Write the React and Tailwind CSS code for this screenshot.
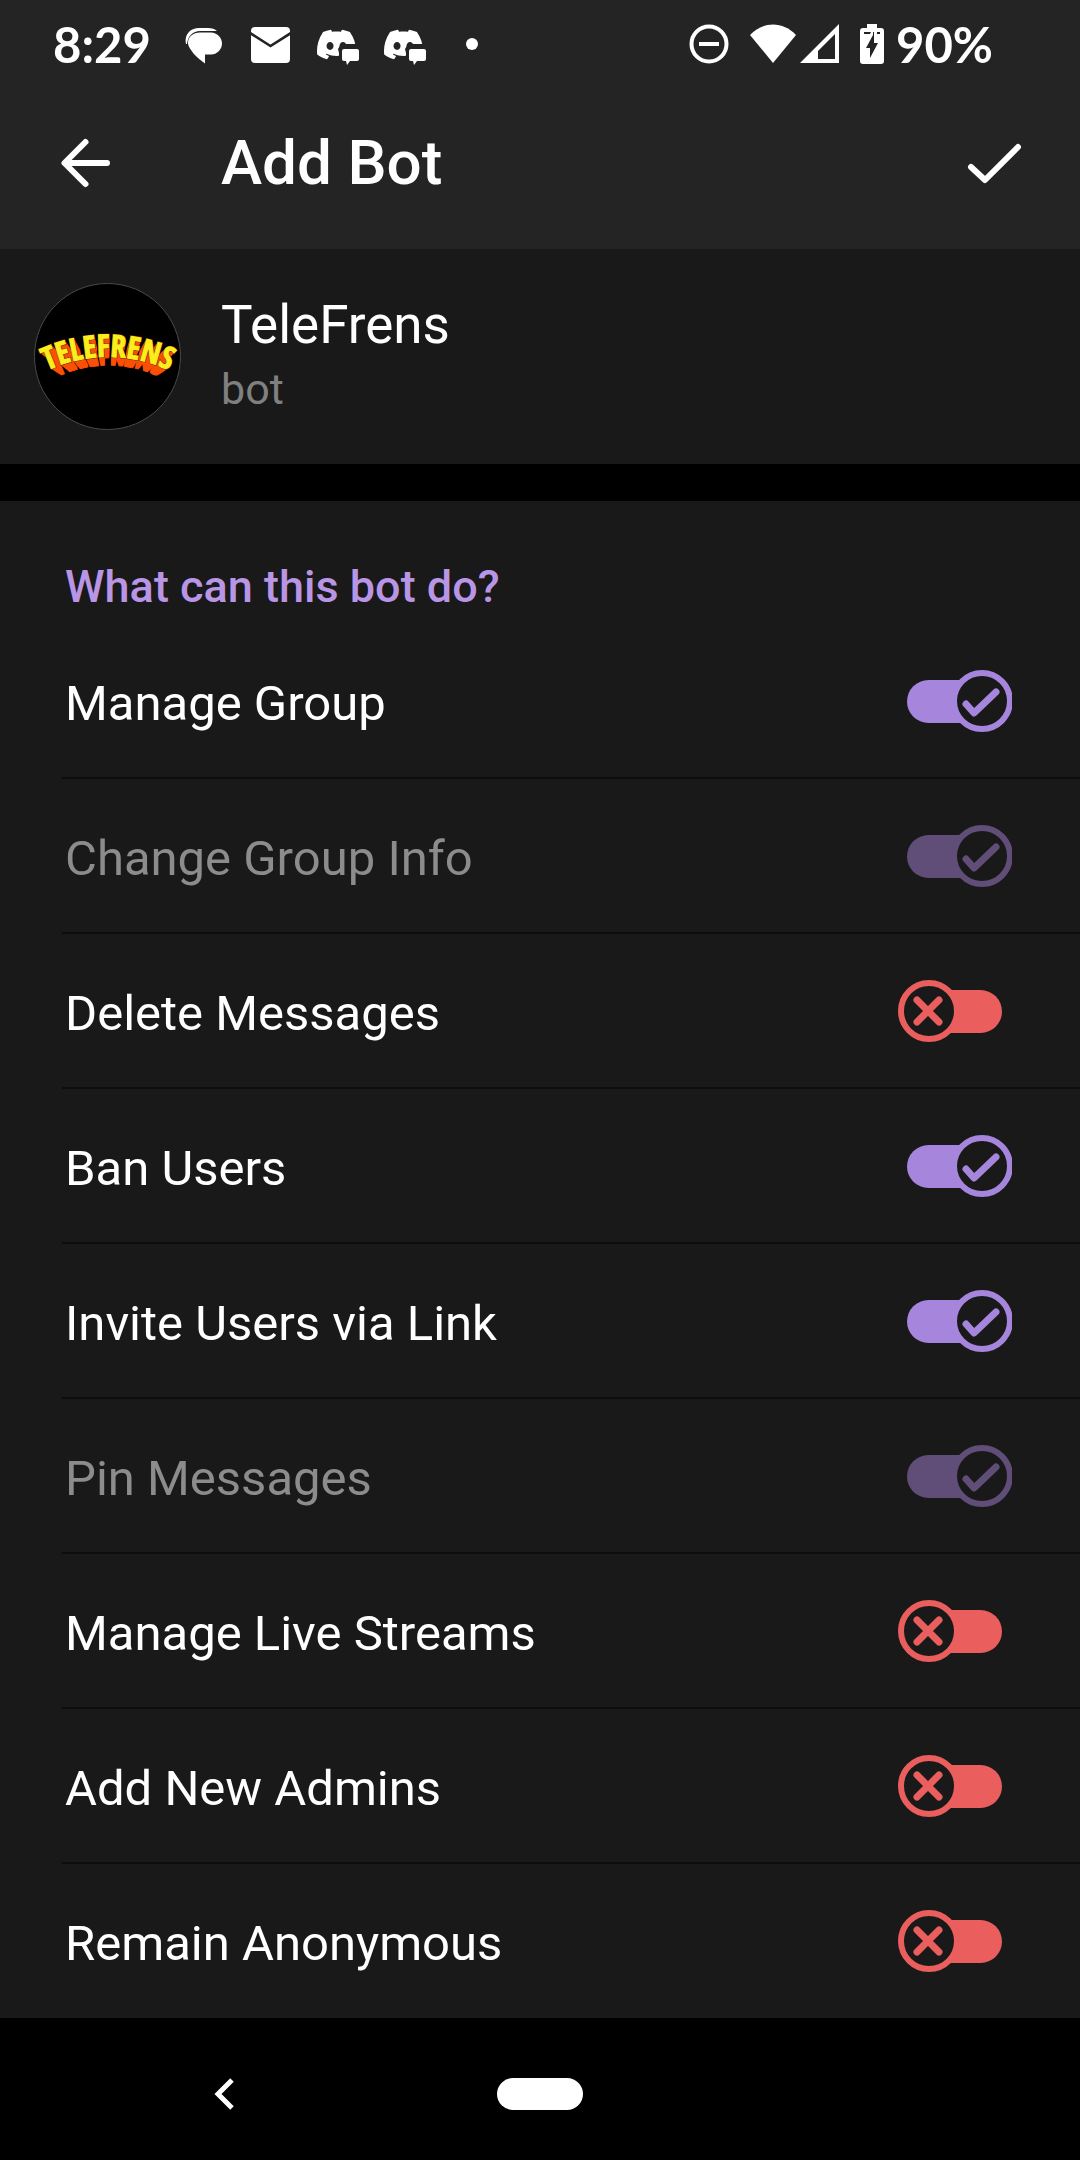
import { useState } from "react";
import { SiDiscord } from "react-icons/si";

const PERMISSIONS = [
  { id: "manage-group", label: "Manage Group", on: true },
  { id: "change-info", label: "Change Group Info", on: true, locked: true },
  { id: "delete-messages", label: "Delete Messages", on: false },
  { id: "ban-users", label: "Ban Users", on: true },
  { id: "invite-link", label: "Invite Users via Link", on: true },
  { id: "pin-messages", label: "Pin Messages", on: true, locked: true },
  { id: "live-streams", label: "Manage Live Streams", on: false },
  { id: "new-admins", label: "Add New Admins", on: false },
  { id: "anonymous", label: "Remain Anonymous", on: false },
];

function ChatIcon() {
  return (
    <svg viewBox="0 0 38 38" className="h-[38px] w-[38px]" fill="#fff" aria-hidden="true">
      <path d="M1 17C-1 8 5 1 14 1h9c4 0 7 1 9 3H15C8 4 3 9 2 17z" />
      <path d="M15 5.500h11c6 0 11 5 11 11s-5 11-11 11h-6v9C15 33 9 28 6 23 4 20 3 18 3 16 3 10 8 5.500 15 5.500z" />
    </svg>
  );
}

function MailIcon() {
  return (
    <svg viewBox="0 0 39 36" className="h-9 w-[39px]" aria-hidden="true">
      <rect width="39" height="36" rx="4" fill="#fff" />
      <path d="M-1 6 19.500 19 40 6" fill="none" stroke="#242424" strokeWidth="2.600" />
    </svg>
  );
}

function DiscordIcon({ maskId }) {
  return (
    <svg viewBox="0 0 42 38" className="h-[38px] w-[42px]" aria-hidden="true">
      <mask id={maskId} maskUnits="userSpaceOnUse" x="0" y="0" width="42" height="38">
        <rect width="42" height="38" fill="#fff" />
        <path d="M24 17h18v21H22V26l-1-4z" fill="#000" />
      </mask>
      <g mask={`url(#${maskId})`}>
        <SiDiscord x="0" y="-2" size={39} color="#fff" />
      </g>
      <path
        d="M27 22h13a2 2 0 0 1 2 2v8a2 2 0 0 1-2 2h-7l-3 4-1-4h-2a2 2 0 0 1-2-2v-8a2 2 0 0 1 2-2z"
        fill="#fff"
      />
    </svg>
  );
}

function StatusBar() {
  return (
    <div className="flex h-[88px] items-center justify-between pr-[87px] pl-[53px] font-['Lato',sans-serif] text-[49px] leading-none font-bold">
      <div className="flex items-center">
        <time className="w-[117px]">8:29</time>
        <span className="flex w-[67px] justify-center pt-1"><ChatIcon /></span>
        <span className="flex w-[67px] justify-center pt-0.5"><MailIcon /></span>
        <span className="flex w-[67px] justify-center pt-1"><DiscordIcon maskId="badge-a" /></span>
        <span className="flex w-[67px] justify-center pt-1"><DiscordIcon maskId="badge-b" /></span>
        <span className="flex w-[67px] justify-center">
          <span className="size-3 rounded-full bg-white" />
        </span>
      </div>
      <div className="flex items-center">
        <svg viewBox="0 0 40 40" className="mr-[21px] size-10" fill="none" stroke="#fff" strokeWidth="4" aria-hidden="true">
          <circle cx="20" cy="20" r="17.500" />
          <path d="M10 20h20" />
        </svg>
        <svg viewBox="0 0 46 40" className="mr-1 h-10 w-[46px]" fill="#fff" aria-hidden="true">
          <path d="M0 11C13-3 33-3 46 11L23 39z" />
        </svg>
        <svg viewBox="0 0 39 40" className="mr-[21px] h-10 w-[39px]" aria-hidden="true">
          <path d="M39 0v39H0zM35 10 18 27v8h17z" fill="#fff" fillRule="evenodd" />
        </svg>
        <svg viewBox="0 0 24 40" className="mr-3 h-10 w-6" aria-hidden="true">
          <path d="M7 0h10v4h4a3 3 0 0 1 3 3v30a3 3 0 0 1-3 3H3a3 3 0 0 1-3-3V7a3 3 0 0 1 3-3h4z" fill="#fff" />
          <path d="M4 8h7l-1 2H4zM17 8h3v2h-3zM14 8v11h4l-8 15V24H6l7-13V8z" fill="#242424" />
        </svg>
        <span>90%</span>
      </div>
    </div>
  );
}

function AppBar() {
  return (
    <div className="flex h-[161px] items-center pr-[56px] pb-[11px] pl-[58px]">
      <button type="button" aria-label="Back" className="mr-[109px]">
        <svg viewBox="0 0 54 54" className="size-[54px]" fill="none" stroke="#fff" strokeWidth="6" strokeLinecap="round" strokeLinejoin="round" aria-hidden="true">
          <path d="M49 27H7M27.500 6 6.500 27l21 21" />
        </svg>
      </button>
      <h1 className="flex-1 text-[62px] leading-none font-medium">Add Bot</h1>
      <button type="button" aria-label="Confirm">
        <svg viewBox="0 0 58 44" className="h-11 w-[58px]" fill="none" stroke="#fff" strokeWidth="6" strokeLinecap="round" strokeLinejoin="round" aria-hidden="true">
          <path d="M5 26 19 39 52 6" />
        </svg>
      </button>
    </div>
  );
}

const EXTRUSION = [0.83, 0.85, 0.87, 0.89, 0.91, 0.93, 0.95, 0.97];

function Avatar() {
  return (
    <svg viewBox="0 0 147 147" className="size-[147px] shrink-0" role="img" aria-label="TeleFrens logo">
      <defs>
        <path id="arch" d="M2 93A145 145 0 0 1 146 93" />
        <text
          id="wordmark"
          textAnchor="middle"
          className="font-['Liberation_Sans_Narrow','Open_Sans_Condensed',sans-serif] text-[31px] font-bold"
        >
          <textPath href="#arch" startOffset="50%">TELEFRENS</textPath>
        </text>
      </defs>
      <circle cx="73.500" cy="73.500" r="73" fill="#000" stroke="#4a4a4a" strokeWidth="1" />
      {EXTRUSION.map((s) => (
        <use key={s} href="#wordmark" fill="#fb4f06" stroke="#fb4f06" strokeWidth="1" transform={`translate(${75 * (1 - s)} ${124 * (1 - s)}) scale(${s})`} />
      ))}
      <use href="#wordmark" fill="none" stroke="#6b2600" strokeWidth="2" />
      <use href="#wordmark" fill="#fdec1e" stroke="#fdec1e" strokeWidth="1" />
    </svg>
  );
}

function Toggle({ id, checked, locked, onChange }) {
  const tone = !checked ? "text-[#eb5e5e]" : locked ? "text-[#604e79]" : "text-[#a685dc]";
  return (
    <span className="relative block h-[62px] w-[114px] shrink-0">
      <svg viewBox="0 0 114 62" className={`h-full w-full ${tone}`} aria-hidden="true">
        {checked ? (
          <>
            <rect x="9" y="10" width="80" height="43" rx="21.500" fill="currentColor" />
            <circle cx="84" cy="31" r="28" fill="#191919" stroke="currentColor" strokeWidth="6" />
            <path d="M68 34 76 43 98 22" fill="none" stroke="currentColor" strokeWidth="7" strokeLinecap="round" strokeLinejoin="round" />
          </>
        ) : (
          <>
            <rect x="25" y="10" width="79" height="43" rx="21.500" fill="currentColor" />
            <circle cx="31" cy="31" r="28" fill="#191919" stroke="currentColor" strokeWidth="6" />
            <path d="M19 20 41 42M41 20 19 42" fill="none" stroke="currentColor" strokeWidth="7" strokeLinecap="round" />
          </>
        )}
      </svg>
      <input
        id={id}
        type="checkbox"
        role="switch"
        checked={checked}
        disabled={locked}
        onChange={onChange}
        className="absolute inset-0 m-0 h-full w-full cursor-pointer opacity-0 disabled:cursor-default"
      />
    </span>
  );
}

export default function App() {
  const [granted, setGranted] = useState(() =>
    Object.fromEntries(PERMISSIONS.map((p) => [p.id, p.on]))
  );

  return (
    <div className="flex min-h-screen flex-col bg-black font-['Roboto',sans-serif] text-white">
      <header className="bg-[#242424]">
        <StatusBar />
        <AppBar />
      </header>

      <section className="flex h-[215px] items-center bg-[#191919] pl-[34px]">
        <Avatar />
        <div className="ml-10">
          <h2 className="text-[53px] leading-[64px]">TeleFrens</h2>
          <p className="text-[43px] leading-[64px] text-[#808080]">bot</p>
        </div>
      </section>

      <main className="mt-[37px] flex-1 bg-[#191919]">
        <h2 className="flex h-[123px] items-end pb-[10px] pl-[65px] text-[45px] leading-[54px] font-medium text-[#b995e6]">
          What can this bot do?
        </h2>
        <ul>
          {PERMISSIONS.map(({ id, label, locked }) => (
            <li key={id} className="group pl-[62px]">
              <div className="flex h-[155px] items-center border-b-2 border-[#0d0d0d] pr-[68px] pl-[3px] group-last:h-[154px] group-last:border-b-0">
                <label htmlFor={id} className={`flex-1 pt-1.5 text-[49px] leading-[60px] ${locked ? "text-[#8c8c8c]" : "text-white"}`}>
                  {label}
                </label>
                <Toggle
                  id={id}
                  checked={granted[id]}
                  locked={locked}
                  onChange={(e) => setGranted({ ...granted, [id]: e.target.checked })}
                />
              </div>
            </li>
          ))}
        </ul>
      </main>

      <nav className="grid h-[142px] grid-cols-[1fr_auto_1fr] items-center pt-2.5">
        <button type="button" aria-label="Back" className="ml-[210px] w-7">
          <svg viewBox="0 0 28 34" className="h-[34px] w-7" fill="none" stroke="#fff" strokeWidth="5" aria-hidden="true">
            <path d="M22 3 8 17l14 14" />
          </svg>
        </button>
        <button type="button" aria-label="Home" className="block h-8 w-[86px] rounded-full bg-white" />
      </nav>
    </div>
  );
}
